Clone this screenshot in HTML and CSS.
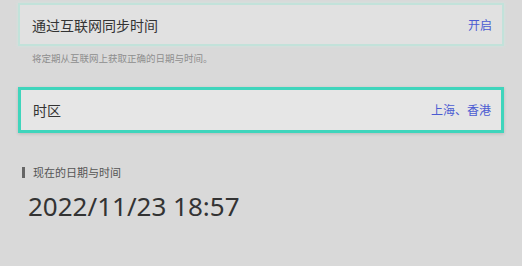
FILE: index.html
```html
<!DOCTYPE html>
<html>
<head>
    <title>日期与时间</title>
    <link rel="stylesheet" href="styles.css">
</head>
<body>
    <main class="settings">
        <div class="row row-soft">
            <span class="row-label">通过互联网同步时间</span>
            <span class="row-value">开启</span>
        </div>
        <p class="hint">将定期从互联网上获取正确的日期与时间。</p>

        <div class="row row-focus">
            <span class="row-label">时区</span>
            <span class="row-value">上海、香港</span>
        </div>

        <h2 class="section-title">现在的日期与时间</h2>
        <div class="clock">2022/11/23 18:57</div>
    </main>
</body>
</html>
```

FILE: styles.css
```css
html,
body {
    margin: 0;
    padding: 0;
    background: #d9d9d9;
    font-family: "Noto Sans", "Noto Sans CJK SC", sans-serif;
    color: #333;
}
.settings {
    padding: 3px 18px 0 18px;
}
.row {
    display: flex;
    justify-content: space-between;
    align-items: center;
    height: 43px;
    padding: 0 10px 0 12px;
    box-sizing: border-box;
}
.row-soft {
    background: #e1e1e1;
    border: 2px solid #c2e2da;
    box-shadow: 0 0 3px #cfe6e0;
}
.row-focus {
    margin-top: 22px;
    height: 46px;
    background: #e6e6e6;
    border: 3px solid #3fd5bc;
    box-shadow: 0 1px 3px rgba(0, 0, 0, 0.15);
}
.row-label {
    font-size: 14px;
    color: #333;
}
.row-value {
    font-size: 12px;
    color: #4b5bd2;
}
.hint {
    margin: 5px 0 0 14px;
    font-size: 9.5px;
    color: #8e8e8e;
}
.section-title {
    margin: 34px 0 0 4px;
    padding-left: 8px;
    border-left: 3px solid #666;
    font-size: 11px;
    line-height: 11px;
    font-weight: normal;
    color: #555;
}
.clock {
    margin: 10px 0 0 10px;
    font-size: 26px;
    color: #333;
}
```
